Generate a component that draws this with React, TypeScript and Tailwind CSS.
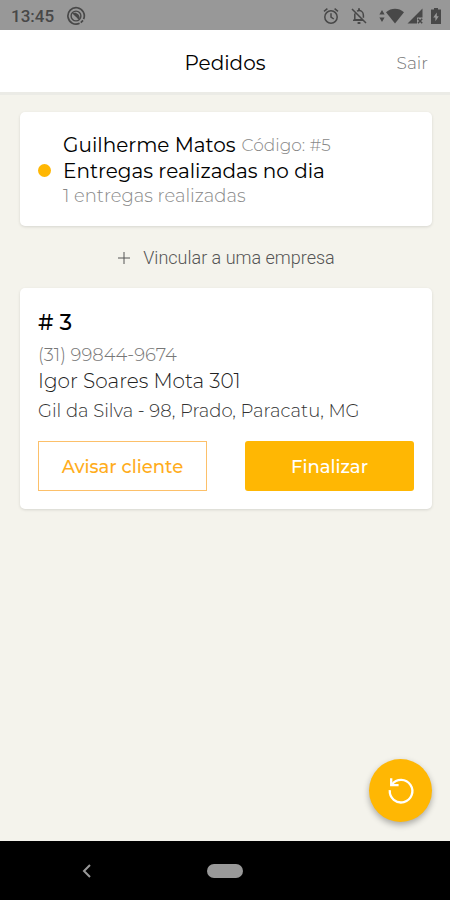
import React from 'react';

interface OrderProps {
    id: number,
    phone: string,
    customer: string,
    address: string
}

const orders: OrderProps[] = [
    {
        id: 3,
        phone: '(31) 99844-9674',
        customer: 'Igor Soares Mota 301',
        address: 'Gil da Silva - 98, Prado, Paracatu, MG'
    }
];

const StatusBar: React.FC = () => {
    return (
        <div className="flex h-[30px] items-center justify-between bg-[#989898] pt-[2px] pr-[9px] pl-[11px] text-[#484848]">
            <div className="flex items-center gap-3">
                <span className="font-['Roboto',sans-serif] text-[17px] leading-6 font-medium">13:45</span>
                <svg width="20" height="20" viewBox="0 0 20 20" fill="none" stroke="currentColor" strokeWidth="1.7">
                    <path d="M13.6 17.3A8.2 8.2 0 1 1 17.6 13.2" />
                    <path d="M17 14.4l-2.2 2.2" />
                    <circle cx="10" cy="10" r="4.9" strokeWidth="1.4" />
                    <path d="M6.4 7.4c3.2-1.8 7.2.6 7.4 5l-1.6 1.2c-1-2.6-3.4-3.4-5.8-6.2z" fill="currentColor" stroke="none" />
                </svg>
            </div>

            <div className="flex items-center">
                {/* Alarm */}
                <svg className="mr-3" width="16" height="18" viewBox="0 0 16 18" fill="none" stroke="currentColor" strokeWidth="1.5">
                    <circle cx="8" cy="10" r="6.2" />
                    <path d="M8 6.2V10l2.8 2M1 4.4l3.4-2.8M15 4.4l-3.4-2.8" />
                </svg>
                {/* Muted notifications */}
                <svg className="mr-3" width="16" height="18" viewBox="0 0 16 18" fill="none" stroke="currentColor" strokeWidth="1.5">
                    <path d="M1 2l14 14M3.8 6.5v6.2h8M2 13.2h10M6 4.2c3.6-1.8 6.4.6 6.4 4v2.6" />
                    <path d="M8 1.2v2M6.6 16h2.8" strokeWidth="1.8" />
                </svg>
                {/* Data arrows */}
                <svg className="mr-px" width="6" height="14" viewBox="0 0 6 14" fill="currentColor">
                    <path d="M3 1l2.6 4.4H.4zM3 13L.4 8.6h5.2z" />
                </svg>
                {/* Wifi */}
                <svg className="mr-[3px]" width="18" height="16" viewBox="0 0 18 16" fill="currentColor">
                    <path d="M0 4.2C5.4-.4 12.6-.4 18 4.2L9 15.5z" />
                </svg>
                {/* Signal */}
                <svg className="mr-2" width="16" height="16" viewBox="0 0 16 16">
                    <path d="M15.5.5v9H10V15.5H.5z" fill="currentColor" />
                    <path d="M11 10.8l4.2 4.4M15.2 10.8L11 15.2" stroke="currentColor" strokeWidth="1.5" />
                </svg>
                {/* Battery */}
                <svg width="10" height="18" viewBox="0 0 10 18">
                    <path d="M3 1h4v1.6h3V17H0V2.6h3z" fill="currentColor" />
                    <path d="M5.8 5.5L2.2 10.6h2.2v3.6l3.4-5H5.8z" fill="#989898" />
                </svg>
            </div>
        </div>
    )
}

const Header: React.FC = () => {
    return (
        <header className="grid h-[65px] grid-cols-3 items-center border-b-3 border-[#ebebe6] bg-white px-[22px] pt-[3px]">
            <h1 className="col-start-2 text-center text-[20px] leading-6">Pedidos</h1>
            <a href="#sair" className="justify-self-end text-[17px] leading-6 font-light text-[#777]">Sair</a>
        </header>
    )
}

const Order: React.FC<OrderProps> = (props) => {
    return (
        <article className="rounded-[5px] bg-white px-[18px] pt-[19px] pb-[18px] shadow-[0_1px_3px_rgba(0,0,0,0.12)]">
            <h2 className="text-[22px] leading-8 font-medium"># {props.id}</h2>
            <p className="mt-1 text-[18px] leading-6 font-light text-[#777]">{props.phone}</p>
            <p className="text-[20px] leading-7 font-light text-[#222]">{props.customer}</p>
            <p className="mt-1 text-[18px] leading-6 font-light text-[#333]">{props.address}</p>

            {/* Actions */}
            <div className="mt-[18px] grid grid-cols-2 gap-[38px]">
                <button type="button" className="h-[50px] border border-[#fcc06a] pt-[2px] text-[18px] font-medium text-[#ffad1c]">Avisar cliente</button>
                <button type="button" className="h-[50px] rounded-[3px] bg-[#ffb703] pt-[2px] text-[18px] font-medium text-white">Finalizar</button>
            </div>
        </article>
    )
}

const App: React.FC = () => {
    return (
        <div className="flex min-h-screen flex-col bg-[#f4f3ec] font-['Montserrat','Inter',sans-serif] text-black">
            <StatusBar />
            <Header />

            <main className="relative flex-1 pt-[17px] pr-[18px] pb-24 pl-5">
                {/* Courier summary */}
                <section className="flex items-center gap-3 rounded-[5px] bg-white px-[18px] pt-5 pb-[18px] shadow-[0_1px_3px_rgba(0,0,0,0.12)]">
                    <span className="size-[13px] shrink-0 rounded-full bg-[#ffb703]"></span>
                    <div>
                        <p className="flex items-center gap-[6px] text-[20px] leading-[26px]">
                            Guilherme Matos
                            <span className="text-[17px] leading-6 font-light text-[#888]">Código: #5</span>
                        </p>
                        <p className="text-[20px] leading-[26px]">Entregas realizadas no dia</p>
                        <p className="text-[18px] leading-6 font-light text-[#888]">1 entregas realizadas</p>
                    </div>
                </section>

                <button type="button" className="flex h-[62px] w-full items-center justify-center gap-3 pt-px font-['Roboto',sans-serif] text-[18px] font-light text-[#555]">
                    <svg width="14" height="14" viewBox="0 0 14 14" stroke="currentColor" strokeWidth="1">
                        <path d="M7 1v12M1 7h12" />
                    </svg>
                    Vincular a uma empresa
                </button>

                {orders.map((order) => <Order key={order.id} {...order} />)}

                <button type="button" aria-label="Atualizar" className="absolute right-[18px] bottom-[19px] flex size-[63px] items-center justify-center rounded-full bg-[#ffb703] text-white shadow-[0_3px_6px_rgba(0,0,0,0.3)]">
                    <svg width="28" height="28" viewBox="0 0 28 28" fill="none" stroke="currentColor" strokeWidth="2.3">
                        <path d="M2.8 13.2A11.3 11.3 0 1 0 5 7.4" />
                        <path d="M4.2 1.2v7h7.4" />
                    </svg>
                </button>
            </main>

            {/* Android navigation */}
            <nav className="grid h-[59px] grid-cols-[1fr_36px_1fr] items-center bg-black">
                <button type="button" aria-label="Voltar" className="ml-[79px] size-4 text-[#999]">
                    <svg className="mx-auto" width="10" height="16" viewBox="0 0 10 16" fill="none" stroke="currentColor" strokeWidth="2">
                        <path d="M8 2L2 8l6 6" />
                    </svg>
                </button>
                <button type="button" aria-label="Início" className="h-[14px] w-9 rounded-full bg-[#999]"></button>
            </nav>
        </div>
    )
}

export default App;
